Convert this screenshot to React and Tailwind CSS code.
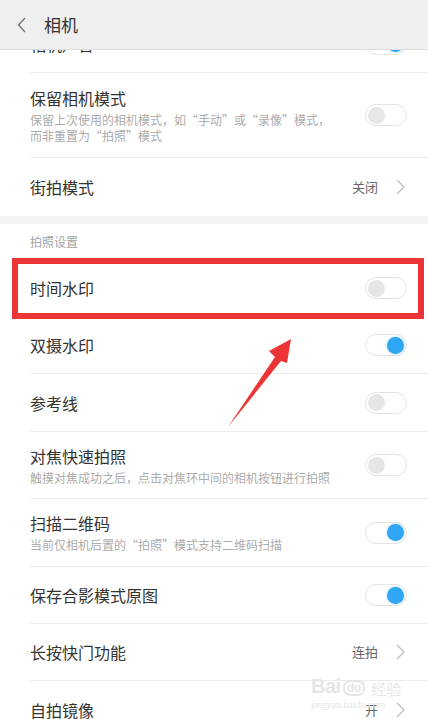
import React from "react";

const font = { fontFamily: '"Noto Sans CJK SC", "Noto Sans", sans-serif' };

function Toggle({ on }) {
  return (
    <div className="w-[42px] h-[22px] rounded-full border border-[#e4e4e4] bg-white flex items-center px-[2px] shrink-0">
      {on ? (
        <div className="ml-auto w-[17px] h-[17px] rounded-full bg-[#2ea6f2] shadow-[0_0_3px_#9ad3f8]" />
      ) : (
        <div className="w-[17px] h-[17px] rounded-full bg-[#e6e6e6]" />
      )}
    </div>
  );
}

function Chevron() {
  return (
    <svg width="9" height="16" viewBox="0 0 9 16" className="ml-[18px] mr-[2px]">
      <path d="M1 1 L8 8 L1 15" fill="none" stroke="#bdbdbd" strokeWidth="1.3" />
    </svg>
  );
}

function Row({ title, sub, right, h, divider = true }) {
  return (
    <div className="pl-[30px]">
      <div
        className={`flex items-center pr-[21px] ${divider ? "border-b border-[#ececec]" : ""}`}
        style={{ height: h }}
      >
        <div className="flex-1 min-w-0">
          <div className="text-[16px] leading-[22px] text-[#333]">{title}</div>
          {sub && (
            <div className="text-[12px] leading-[16px] text-[#ababab] mt-[3px]">
              {sub.map((s, i) => (
                <div key={i}>{s}</div>
              ))}
            </div>
          )}
        </div>
        {right}
      </div>
    </div>
  );
}

function Value({ text }) {
  return (
    <div className="flex items-center">
      <span className="text-[13px] text-[#666]">{text}</span>
      <Chevron />
    </div>
  );
}

export default function App() {
  return (
    <div className="relative w-[428px] h-[719px] overflow-hidden bg-white" style={font}>
      <div className="pt-[15px]">
        <Row title="相机声音" h={58} right={<Toggle on />} />
        <Row
          title="保留相机模式"
          sub={["保留上次使用的相机模式，如“手动”或“录像”模式，", "而非重置为“拍照”模式"]}
          h={85}
          right={<Toggle />}
        />
        <Row title="街拍模式" h={58} divider={false} right={<Value text="关闭" />} />
        <div className="h-[8px] bg-[#f3f3f3]" />
        <div className="h-[35px] pl-[30px] flex items-center text-[12px] text-[#a3a3a3]">拍照设置</div>
        <Row title="时间水印" h={58} divider={false} right={<Toggle />} />
        <Row title="双摄水印" h={57} right={<Toggle on />} />
        <Row title="参考线" h={58} right={<Toggle />} />
        <Row
          title="对焦快速拍照"
          sub={["触摸对焦成功之后，点击对焦环中间的相机按钮进行拍照"]}
          h={67}
          right={<Toggle />}
        />
        <Row
          title="扫描二维码"
          sub={["当前仅相机后置的“拍照”模式支持二维码扫描"]}
          h={68}
          right={<Toggle on />}
        />
        <Row title="保存合影模式原图" h={57} right={<Toggle on />} />
        <Row title="长按快门功能" h={57} right={<Value text="连拍" />} />
        <Row title="自拍镜像" h={58} divider={false} right={<Value text="开" />} />
      </div>

      {/* header */}
      <div className="absolute top-0 left-0 right-0 h-[50px] bg-[#efefef] border-b border-[#dcdcdc] flex items-center">
        <svg width="10" height="16" viewBox="0 0 10 16" className="ml-[17px]">
          <path d="M8 1 L1.5 8 L8 15" fill="none" stroke="#777" strokeWidth="1.4" />
        </svg>
        <span className="ml-[17px] text-[17px] text-[#333]">相机</span>
      </div>

      {/* red highlight box */}
      <div className="absolute left-[12px] top-[258px] w-[412px] h-[61px] border-[6px] border-[#ee3535]" />

      {/* arrow */}
      <svg className="absolute left-0 top-0 pointer-events-none" width="428" height="719">
        <polygon
          points="228,427 275,357 269,351 291,339 287,363 281,361"
          fill="#ee3535"
        />
      </svg>

      {/* watermark */}
      <div className="absolute left-[311px] top-[676px] text-[#e6e6e6] pointer-events-none select-none">
        <div className="flex items-end leading-none">
          <span className="text-[20px] font-bold tracking-tight" style={{ fontFamily: '"Liberation Sans", sans-serif' }}>Bai</span>
          <span className="mx-[2px] text-[12px] font-bold border-2 border-[#e6e6e6] rounded-[7px] px-[2px]" style={{ fontFamily: '"Liberation Sans", sans-serif' }}>du</span>
          <span className="text-[15px] ml-[4px]">经验</span>
        </div>
        <div className="text-[10px] mt-[1px]" style={{ fontFamily: '"Liberation Serif", serif' }}>jingyan.baidu.com</div>
      </div>
    </div>
  );
}
